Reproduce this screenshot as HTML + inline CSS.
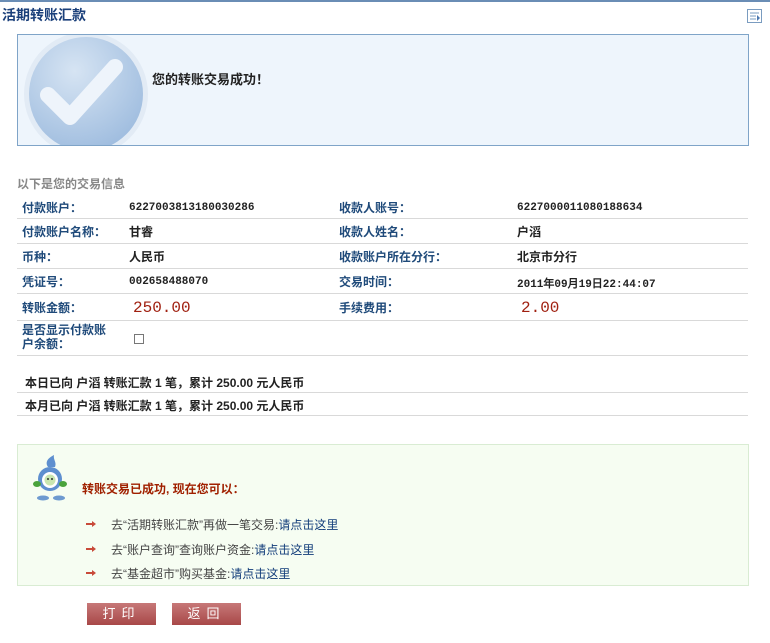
<!DOCTYPE html>
<html><head><meta charset="utf-8"><style>
body{margin:0;width:770px;height:643px;background:#fff;position:relative;font-family:"Liberation Sans","SimSun","WenQuanYi Zen Hei","Noto Sans CJK SC",sans-serif;font-size:12px;overflow:hidden}
.a{position:absolute;white-space:nowrap}
.lb{color:#1f4a7a;font-weight:bold}
.v{color:#222;font-weight:bold}
.n{font-family:"Liberation Mono",monospace;font-size:11px}
.ln{position:absolute;left:17px;width:731px;height:1px;background:#d9d9d9}
.btn{position:absolute;top:603px;width:69px;height:22px;background:linear-gradient(#c77878,#a84848);color:#fff;text-align:center;line-height:22px;font-size:13px;letter-spacing:6px}
.arr{position:absolute;left:86px;width:10px;height:6px}
.lk{color:#123d7a}
</style></head><body>
<div class="a" style="left:0;top:0;width:770px;height:2px;background:#6a8db5"></div>
<div class="a" style="left:2px;top:5px;font-size:14px;font-weight:bold;color:#1a3f7a">活期转账汇款</div>
<svg class="a" style="left:747px;top:9px" width="16" height="14"><rect x="0.5" y="0.5" width="14" height="13" fill="#fff" stroke="#7a9cc0"/><path d="M3 4h9M3 7h6M3 10h6" stroke="#7a9cc0"/><path d="M10 6l3 3-3 3z" fill="#4b78b0"/></svg>
<div class="a" style="left:17px;top:34px;width:730px;height:110px;border:1px solid #7fa4c8;background:#eef5fc;overflow:hidden">
<svg class="a" style="left:4px;top:-4px" width="130" height="124"><defs><radialGradient id="g" cx="0.4" cy="0.3" r="0.8"><stop offset="0" stop-color="#d6e4f3"/><stop offset="1" stop-color="#9ab9dd"/></radialGradient></defs><circle cx="64" cy="63" r="62" fill="#e2ebf5"/><circle cx="64" cy="63" r="57" fill="url(#g)"/><path d="M26 64l22 22 45-50" stroke="#eef4fb" stroke-width="16" fill="none" stroke-linecap="round" stroke-linejoin="round"/></svg>
<div class="a" style="left:134px;top:34px;font-size:13px;font-weight:bold;color:#222">您的转账交易成功！</div>
</div>
<div class="a" style="left:17px;top:175px;font-weight:bold;color:#888">以下是您的交易信息</div>
<div class="a lb" style="left:22px;top:199px">付款账户：</div><div class="a v n" style="left:129px;top:202px">6227003813180030286</div>
<div class="a lb" style="left:339px;top:199px">收款人账号：</div><div class="a v n" style="left:517px;top:202px">6227000011080188634</div>
<div class="ln" style="top:218px"></div>
<div class="a lb" style="left:22px;top:223px">付款账户名称：</div><div class="a v" style="left:129px;top:223px">甘睿</div>
<div class="a lb" style="left:339px;top:223px">收款人姓名：</div><div class="a v" style="left:517px;top:223px">户滔</div>
<div class="ln" style="top:243px"></div>
<div class="a lb" style="left:22px;top:248px">币种：</div><div class="a v" style="left:129px;top:248px">人民币</div>
<div class="a lb" style="left:339px;top:248px">收款账户所在分行：</div><div class="a v" style="left:517px;top:248px">北京市分行</div>
<div class="ln" style="top:268px"></div>
<div class="a lb" style="left:22px;top:273px">凭证号：</div><div class="a v n" style="left:129px;top:276px">002658488070</div>
<div class="a lb" style="left:339px;top:273px">交易时间：</div><div class="a v n" style="left:517px;top:275px">2011年09月19日22:44:07</div>
<div class="ln" style="top:293px"></div>
<div class="a lb" style="left:22px;top:299px">转账金额：</div><div class="a" style="left:133px;top:299px;font-size:16px;color:#a02010;font-family:'Liberation Mono',monospace">250.00</div>
<div class="a lb" style="left:339px;top:299px">手续费用：</div><div class="a" style="left:521px;top:299px;font-size:16px;color:#a02010;font-family:'Liberation Mono',monospace">2.00</div>
<div class="ln" style="top:320px"></div>
<div class="a lb" style="left:22px;top:323px;line-height:14px">是否显示付款账<br>户余额：</div>
<div class="a" style="left:134px;top:334px;width:8px;height:8px;border:1px solid #777;background:#fff"></div>
<div class="ln" style="top:355px"></div>
<div class="a v" style="left:25px;top:374px">本日已向 户滔 转账汇款 1 笔，累计 250.00 元人民币</div>
<div class="ln" style="top:392px"></div>
<div class="a v" style="left:25px;top:397px">本月已向 户滔 转账汇款 1 笔，累计 250.00 元人民币</div>
<div class="ln" style="top:415px"></div>
<div class="a" style="left:17px;top:444px;width:730px;height:140px;border:1px solid #d9ecd3;background:#f6fdf2"></div>
<svg class="a" style="left:32px;top:455px" width="40" height="46"><ellipse cx="11" cy="43" rx="6" ry="2.5" fill="#6e9ad0"/><ellipse cx="27" cy="43" rx="6" ry="2.5" fill="#6e9ad0"/><circle cx="18" cy="24" r="12" fill="#5e8fcf"/><path d="M16 12c-4-6 2-10 6-12-1 5 3 7 1 12z" fill="#5e8fcf"/><circle cx="18" cy="25" r="8" fill="#fff"/><circle cx="18" cy="25" r="5.5" fill="#c9e6b0"/><circle cx="16" cy="24" r="1" fill="#333"/><circle cx="20" cy="24" r="1" fill="#333"/><ellipse cx="5" cy="29" rx="4" ry="3" fill="#4aa33c"/><ellipse cx="31" cy="29" rx="4" ry="3" fill="#4aa33c"/></svg>
<div class="a" style="left:82px;top:480px;font-weight:bold;color:#a02000">转账交易已成功, 现在您可以：</div>
<svg class="arr" style="top:521px" viewBox="0 0 10 6"><path d="M0 2h6V0l4 3-4 3V4H0z" fill="#c84a3a"/></svg>
<div class="a" style="left:111px;top:516px;color:#444">去“活期转账汇款”再做一笔交易:<span class="lk">请点击这里</span></div>
<svg class="arr" style="top:546px" viewBox="0 0 10 6"><path d="M0 2h6V0l4 3-4 3V4H0z" fill="#c84a3a"/></svg>
<div class="a" style="left:111px;top:541px;color:#444">去“账户查询”查询账户资金:<span class="lk">请点击这里</span></div>
<svg class="arr" style="top:570px" viewBox="0 0 10 6"><path d="M0 2h6V0l4 3-4 3V4H0z" fill="#c84a3a"/></svg>
<div class="a" style="left:111px;top:565px;color:#444">去“基金超市”购买基金:<span class="lk">请点击这里</span></div>
<div class="btn" style="left:87px">打印</div>
<div class="btn" style="left:172px">返回</div>
</body></html>
